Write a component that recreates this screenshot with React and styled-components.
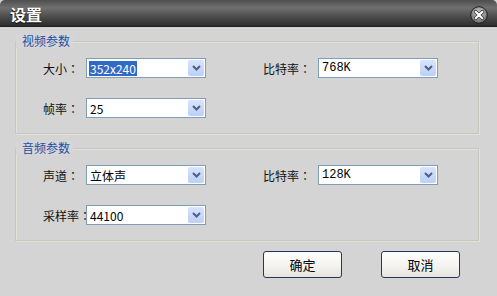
import React from "react";
import styled, { createGlobalStyle } from "styled-components";

const Global = createGlobalStyle`
  html, body { margin: 0; padding: 0; background: #d4d4d4; }
  body { font-family: "Noto Sans CJK SC", "Liberation Sans", sans-serif; }
`;

const Window = styled.div`
  width: 497px;
  height: 296px;
  background: #d4d4d4;
  display: flex;
  flex-direction: column;
  overflow: hidden;
  border-radius: 5px 5px 0 0;
`;

const TitleBar = styled.div`
  height: 27px;
  flex: none;
  display: flex;
  align-items: center;
  justify-content: space-between;
  padding: 0 9px 0 10px;
  background: linear-gradient(#4e4e4e 0%, #707070 30%, #4c4c4c 65%, #2c2c2c 100%);
  border-bottom: 1px solid #1e1e1e;
  box-sizing: border-box;
`;

const Title = styled.div`
  color: #fff;
  font-size: 16px;
  font-weight: 700;
  line-height: 1;
  text-shadow: 0 1px 1px #000;
  margin-top: 1px;
`;

const CloseBtn = styled.svg`
  width: 18px;
  height: 18px;
  margin-top: 4px;
`;

const Content = styled.div`
  display: flex;
  flex-direction: column;
  gap: 14px;
  padding: 14px 18px 0 15px;
`;

const Group = styled.div`
  position: relative;
  height: 93px;
  box-sizing: border-box;
  border: 1px solid #c7c8bd;
  box-shadow: inset 1px 1px 0 #e1e2d9, 1px 1px 0 #e1e2d9;
  padding: ${(p) => p.$pt}px 0 0 27px;
  display: flex;
  flex-direction: column;
  gap: 20px;
`;

const Legend = styled.div`
  position: absolute;
  top: -8px;
  left: 0;
  padding: 0 3px 0 6px;
  background: #d6d6d6;
  color: #1f4fa6;
  font-size: 12px;
  line-height: 14px;
`;

const Row = styled.div`
  display: flex;
  align-items: center;
  height: 20px;
`;

const Field = styled.div`
  display: flex;
  align-items: center;
  width: ${(p) => p.$w}px;
  flex: none;
`;

const Label = styled.div`
  width: ${(p) => p.$w}px;
  flex: none;
  font-size: 12px;
  color: #111;
  white-space: nowrap;
`;

const Colon = styled.span`
  font-family: "Noto Sans CJK TC", "Noto Sans CJK SC", sans-serif;
`;

const Select = styled.div`
  width: 120px;
  height: 20px;
  box-sizing: border-box;
  border: 1px solid #7f9db9;
  background: #fff;
  display: flex;
  align-items: center;
  justify-content: space-between;
  flex: none;
`;

const Value = styled.span`
  margin-left: 2px;
  padding: 0 1px;
  font-size: 12px;
  line-height: 15px;
  font-family: ${(p) =>
    p.$mono
      ? '"Liberation Mono", "DejaVu Sans Mono", monospace'
      : '"Noto Sans CJK SC", "Liberation Sans", sans-serif'};
  color: ${(p) => (p.$sel ? "#fff" : "#000")};
  background: ${(p) => (p.$sel ? "#316ac5" : "transparent")};
`;

const Arrow = styled.div`
  width: 16px;
  height: 16px;
  margin-right: 1px;
  border-radius: 2px;
  background: linear-gradient(#d9e4fd, #bccff7);
  display: flex;
  align-items: center;
  justify-content: center;
`;

const Footer = styled.div`
  display: flex;
  justify-content: flex-end;
  gap: 39px;
  padding: 10px 37px 0 0;
`;

const Button = styled.button`
  width: 79px;
  height: 27px;
  box-sizing: border-box;
  border: 1px solid #23395a;
  border-radius: 3px;
  background: linear-gradient(#ffffff, #f3f2ee 60%, #e4e3dc);
  font-family: "Noto Sans CJK SC", "Liberation Sans", sans-serif;
  font-size: 13px;
  color: #000;
  padding: 0;
`;

function Dropdown({ value, sel, mono }) {
  return (
    <Select>
      <Value $sel={sel} $mono={mono}>{value}</Value>
      <Arrow>
        <svg width="9" height="6" viewBox="0 0 9 6">
          <path d="M1 1 L4.5 4.5 L8 1" fill="none" stroke="#4d5f83" strokeWidth="2" />
        </svg>
      </Arrow>
    </Select>
  );
}

function FieldLabel({ w, text }) {
  return (
    <Label $w={w}>
      {text}
      <Colon>：</Colon>
    </Label>
  );
}

export default function App() {
  return (
    <>
      <Global />
      <Window>
        <TitleBar>
          <Title>设置</Title>
          <CloseBtn viewBox="0 0 18 18">
            <defs>
              <radialGradient id="cg" cx="50%" cy="35%" r="65%">
                <stop offset="0%" stopColor="#c8c8c8" />
                <stop offset="100%" stopColor="#6a6a6a" />
              </radialGradient>
            </defs>
            <circle cx="9" cy="9" r="8.3" fill="url(#cg)" stroke="#1e1e1e" strokeWidth="1" />
            <path d="M5.7 5.7 L12.3 12.3 M12.3 5.7 L5.7 12.3" stroke="#3a3a3a" strokeWidth="3.6" strokeLinecap="round" />
            <path d="M5.7 5.7 L12.3 12.3 M12.3 5.7 L5.7 12.3" stroke="#fff" strokeWidth="2" strokeLinecap="round" />
          </CloseBtn>
        </TitleBar>
        <Content>
          <Group $pt={16}>
            <Legend>视频参数</Legend>
            <Row>
              <Field $w={220}>
                <FieldLabel w={43} text="大小" />
                <Dropdown value="352x240" sel />
              </Field>
              <Field $w={175}>
                <FieldLabel w={55} text="比特率" />
                <Dropdown value="768K" mono />
              </Field>
            </Row>
            <Row>
              <Field $w={220}>
                <FieldLabel w={43} text="帧率" />
                <Dropdown value="25" />
              </Field>
            </Row>
          </Group>
          <Group $pt={16}>
            <Legend>音频参数</Legend>
            <Row>
              <Field $w={220}>
                <FieldLabel w={43} text="声道" />
                <Dropdown value="立体声" />
              </Field>
              <Field $w={175}>
                <FieldLabel w={55} text="比特率" />
                <Dropdown value="128K" mono />
              </Field>
            </Row>
            <Row>
              <Field $w={220}>
                <FieldLabel w={43} text="采样率" />
                <Dropdown value="44100" />
              </Field>
            </Row>
          </Group>
        </Content>
        <Footer>
          <Button>确定</Button>
          <Button>取消</Button>
        </Footer>
      </Window>
    </>
  );
}
